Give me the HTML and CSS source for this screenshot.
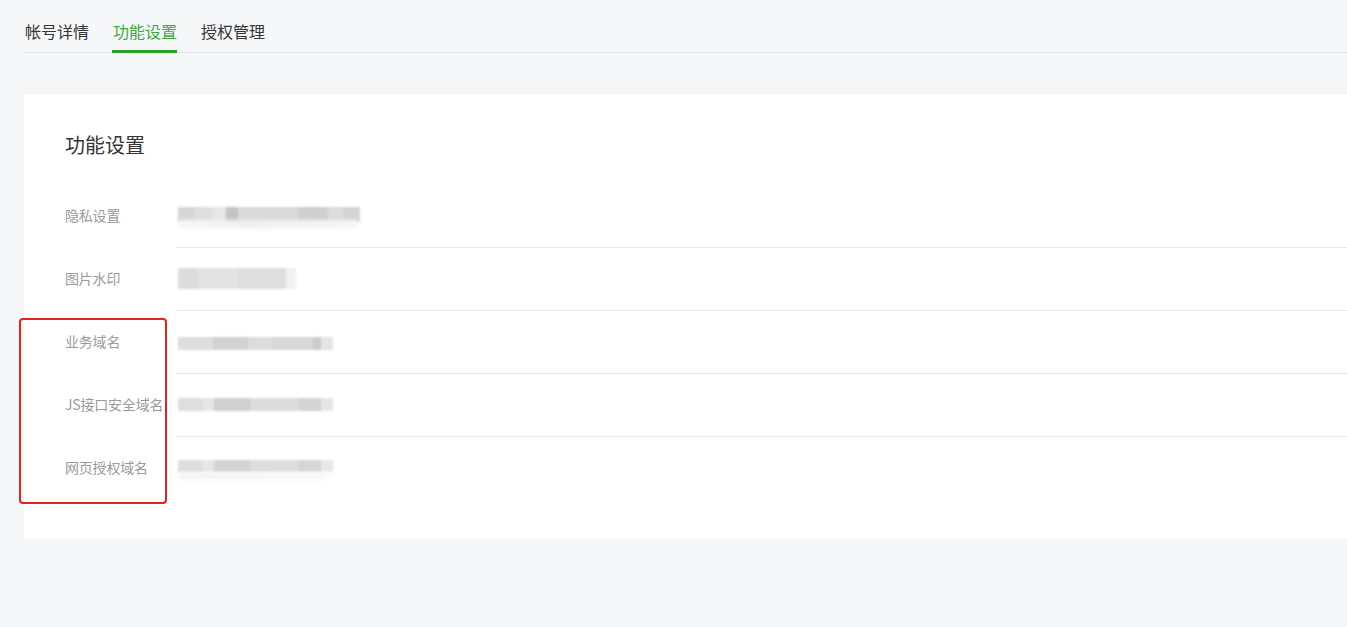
FILE: index.html
```html
<!DOCTYPE html>
<html lang="zh-CN">
<head>
<meta charset="utf-8">
<title>功能设置</title>
<link rel="stylesheet" href="styles.css">
</head>
<body>
<div class="page">
  <nav class="tabs">
    <a class="tab">帐号详情</a>
    <a class="tab active">功能设置</a>
    <a class="tab">授权管理</a>
  </nav>
  <section class="card">
    <h2 class="card-title">功能设置</h2>
    <div class="rows">
      <div class="row">
        <div class="label">隐私设置</div>
        <div class="value"><span class="blur b1"></span><span class="blur-tail t1"></span></div>
      </div>
      <div class="row">
        <div class="label">图片水印</div>
        <div class="value"><span class="blur b2"></span></div>
      </div>
      <div class="row">
        <div class="label">业务域名</div>
        <div class="value"><span class="blur b3"></span></div>
      </div>
      <div class="row">
        <div class="label">JS接口安全域名</div>
        <div class="value"><span class="blur b4"></span></div>
      </div>
      <div class="row">
        <div class="label">网页授权域名</div>
        <div class="value"><span class="blur b5"></span><span class="blur-tail t5"></span></div>
      </div>
    </div>
    <div class="highlight"></div>
  </section>
</div>
</body>
</html>
```

FILE: styles.css
```css
html, body {
  margin: 0;
  padding: 0;
  background: #f6f7f9;
  overflow: hidden;
}
body {
  font-family: "Noto Sans CJK SC", "Noto Sans", sans-serif;
  color: #353535;
}
.page {
  width: 1400px;
  padding-left: 24px;
}
.tabs {
  display: flex;
  gap: 24px;
  height: 52px;
  border-bottom: 1px solid #e4e6ea;
  padding-left: 1px;
}
.tab {
  position: relative;
  font-size: 16px;
  line-height: 24px;
  padding-top: 19px;
  color: #353535;
  cursor: pointer;
}
.tab.active {
  color: #3daa3a;
}
.tab.active::after {
  content: "";
  position: absolute;
  left: -1px;
  right: 0;
  bottom: -1px;
  height: 3px;
  background: #2aa22a;
}
.card {
  position: relative;
  margin-top: 41px;
  background: #fff;
  padding: 37px 0 39px 41px;
  box-shadow: 0 1px 3px rgba(0, 0, 0, 0.04);
}
.card-title {
  margin: 0 0 26px;
  font-size: 20px;
  line-height: 28px;
  font-weight: 400;
  color: #353535;
}
.row {
  display: flex;
  height: 63px;
}
.label {
  width: 111px;
  flex: none;
  display: flex;
  align-items: center;
  padding-bottom: 3px;
  box-sizing: border-box;
  font-size: 14px;
  color: #9a9a9a;
  white-space: nowrap;
  letter-spacing: -0.2px;
}
.value {
  position: relative;
  flex: 1;
  display: flex;
  align-items: center;
  padding-left: 2px;
  border-bottom: 1px solid #e7e7eb;
}
.row:last-child .value {
  border-bottom: none;
}
.blur {
  display: block;
  height: 14px;
  filter: blur(1px);
}
.b1 {
  width: 182px;
  height: 15px;
  margin-top: -4px;
  background: linear-gradient(90deg, #d6d6d6 0 16px, #dedede 16px 34px, #e6e6e6 34px 48px, #c4c4c4 48px 60px, #dadada 60px 120px, #cfcfcf 120px 150px, #dcdcdc 150px 165px, #d4d4d4 165px 182px);
}
.t1 {
  position: absolute;
  left: 2px;
  top: 35px;
  width: 180px;
  height: 8px;
  background: linear-gradient(90deg, #f6f6f6, #eeeeee 40%, #f4f4f4);
  filter: blur(2px);
}
.b2 {
  width: 118px;
  height: 21px;
  margin-top: -2px;
  background: linear-gradient(90deg, #dcdcdc 0 20px, #e3e3e3 20px 60px, #dedede 60px 108px, #f1f1f1 108px 118px);
}
.b3 {
  width: 155px;
  height: 13px;
  margin-top: 2px;
  background: linear-gradient(90deg, #dedede 0 35px, #d2d2d2 35px 70px, #dcdcdc 70px 95px, #d8d8d8 95px 135px, #cccccc 135px 143px, #e4e4e4 143px 155px);
}
.b4 {
  width: 155px;
  height: 13px;
  margin-top: -2px;
  background: linear-gradient(90deg, #dedede 0 24px, #e6e6e6 24px 36px, #d0d0d0 36px 72px, #dcdcdc 72px 120px, #d4d4d4 120px 143px, #e6e6e6 143px 155px);
}
.b5 {
  width: 155px;
  height: 12px;
  margin-top: -5px;
  background: linear-gradient(90deg, #dedede 0 24px, #e6e6e6 24px 36px, #d4d4d4 36px 72px, #dedede 72px 120px, #d6d6d6 120px 143px, #e8e8e8 143px 155px);
}
.t5 {
  position: absolute;
  left: 2px;
  top: 36px;
  width: 150px;
  height: 6px;
  background: linear-gradient(90deg, #f2f2f2, #f6f6f6);
  filter: blur(2px);
}
.highlight {
  position: absolute;
  left: -5px;
  top: 224px;
  width: 144px;
  height: 182px;
  border: 2px solid #e2241c;
  border-radius: 4px;
  pointer-events: none;
}
```
